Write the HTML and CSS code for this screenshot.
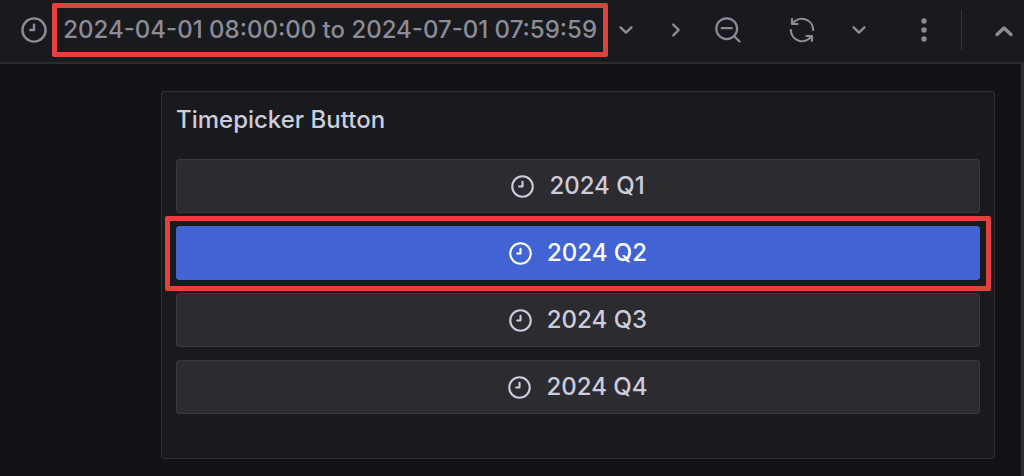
FILE: index.html
```html
<!DOCTYPE html>
<html lang="en">
<head>
    <meta charset="UTF-8">
    <meta name="viewport" content="width=device-width, initial-scale=1.0">
    <title>Timepicker Button</title>
    <link rel="stylesheet" href="styles.css">
</head>
<body>
    <svg class="sprite" aria-hidden="true">
        <symbol id="clock" viewBox="0 0 24 24">
            <circle cx="12" cy="12" r="10.7"/>
            <path d="M12 7v5H8.5"/>
        </symbol>
        <symbol id="chevron" viewBox="0 0 24 24">
            <path d="M7 9.5l5 5 5-5"/>
        </symbol>
    </svg>

    <header class="toolbar">
        <button class="time-range" type="button">
            <svg class="icon"><use href="#clock"/></svg>
            <span class="time-text">2024-04-01 08:00:00 to 2024-07-01 07:59:59</span>
            <svg class="icon caret"><use href="#chevron"/></svg>
        </button>
        <button class="tool next" type="button" aria-label="Move time range forwards">
            <svg class="icon"><use href="#chevron"/></svg>
        </button>
        <button class="tool zoom-out" type="button" aria-label="Zoom out time range">
            <svg class="icon" viewBox="0 0 26 26">
                <circle cx="11.7" cy="11.7" r="10.4"/>
                <path d="M6.7 11.2h10M19.2 19.2l5.3 5.3"/>
            </svg>
        </button>
        <button class="tool refresh" type="button" aria-label="Refresh dashboard">
            <svg class="icon" viewBox="0 0 26 26">
                <path d="M3 2v5h5.5M3.7 6.8A11.2 11.2 0 0 1 24.2 13M23 24v-5h-5.5M22.3 19.2A11.2 11.2 0 0 1 1.8 13"/>
            </svg>
        </button>
        <button class="tool interval" type="button" aria-label="Choose refresh interval">
            <svg class="icon"><use href="#chevron"/></svg>
        </button>
        <button class="tool more" type="button" aria-label="More actions">
            <svg class="icon dots" viewBox="0 0 26 26">
                <circle cx="13" cy="4" r="2.7"/>
                <circle cx="13" cy="13" r="2.7"/>
                <circle cx="13" cy="22" r="2.7"/>
            </svg>
        </button>
        <span class="divider"></span>
        <button class="tool collapse" type="button" aria-label="Toggle top bar">
            <svg class="icon bold" viewBox="0 0 26 26"><path d="M6 17.5l7-6.5 7 6.5"/></svg>
        </button>
    </header>

    <main class="dashboard">
        <section class="panel">
            <h2 class="panel-title">Timepicker Button</h2>
            <div class="quarters">
                <button class="quarter" type="button"><svg class="icon"><use href="#clock"/></svg>2024 Q1</button>
                <button class="quarter active" type="button"><svg class="icon"><use href="#clock"/></svg>2024 Q2</button>
                <button class="quarter" type="button"><svg class="icon"><use href="#clock"/></svg>2024 Q3</button>
                <button class="quarter" type="button"><svg class="icon"><use href="#clock"/></svg>2024 Q4</button>
            </div>
        </section>
    </main>
</body>
</html>
```

FILE: styles.css
```css
* {
    box-sizing: border-box;
}
body {
    display: flex;
    flex-direction: column;
    min-height: 100vh;
    margin: 0;
    background-color: #121317;
    color: #ccccdc;
    font-family: Inter, sans-serif;
    font-size: 24px;
    font-weight: 500;
    line-height: 28px;
}
button {
    padding: 0;
    border: 0;
    background: none;
    color: inherit;
    font: inherit;
    cursor: pointer;
}
.sprite {
    position: absolute;
    width: 0;
    height: 0;
}
.icon {
    flex: none;
    width: 26px;
    height: 26px;
    fill: none;
    stroke: currentColor;
    stroke-width: 2.2;
    stroke-linecap: round;
    stroke-linejoin: round;
}

/* Toolbar */
.toolbar {
    display: flex;
    align-items: center;
    justify-content: flex-end;
    padding: 3px 0 5px;
    border-bottom: 2px solid #2a2b2f;
    background-color: #191a1e;
    color: #8c8b98;
}
.time-range {
    display: flex;
    align-items: center;
    gap: 5px;
    white-space: nowrap;
}
.time-text {
    padding: 8px 6px;
    border: 5px solid #e5403b;
    border-radius: 2px;
}
.tool {
    display: flex;
    flex: none;
    align-items: center;
    justify-content: center;
    width: 52px;
    height: 52px;
}
.next {
    width: 48px;
    margin: 0 2px 0 13px;
}
.next .icon {
    transform: rotate(-90deg);
}
.refresh {
    margin-left: 22px;
}
.interval {
    width: 36px;
    margin-left: 13px;
}
.more {
    width: 48px;
    margin: 0 13px 0 23px;
}
.dots {
    fill: currentColor;
    stroke: none;
}
.divider {
    width: 1px;
    height: 40px;
    background-color: #34353a;
}
.collapse {
    width: 40px;
    margin-left: 22px;
}
.bold {
    stroke-width: 3.4;
}

/* Dashboard */
.dashboard {
    flex: 1;
    padding: 27px 26px 17px 161px;
    border-right: 3px solid #2b2c2e;
}
.panel {
    padding: 14px 14px 44px;
    border: 1px solid #2f3035;
    border-radius: 3px;
    background-color: #191a1e;
}
.panel-title {
    margin: 0 0 25px;
    font-size: 24px;
    font-weight: 500;
}
.quarters {
    display: flex;
    flex-direction: column;
    gap: 13px;
}
.quarter {
    display: flex;
    position: relative;
    align-items: center;
    justify-content: center;
    gap: 15px;
    height: 54px;
    border: 1px solid #38383d;
    border-radius: 3px;
    background-color: #2c2b30;
}
.quarter .icon {
    width: 23px;
    height: 23px;
}
.active {
    border-color: #4163d4;
    background-color: #4163d4;
    color: #fff;
}
/* Red frame around the selected quarter */
.active::after {
    content: "";
    position: absolute;
    inset: -11px -12px -12px;
    border: 5px solid #e5403b;
    border-radius: 2px;
}
```
